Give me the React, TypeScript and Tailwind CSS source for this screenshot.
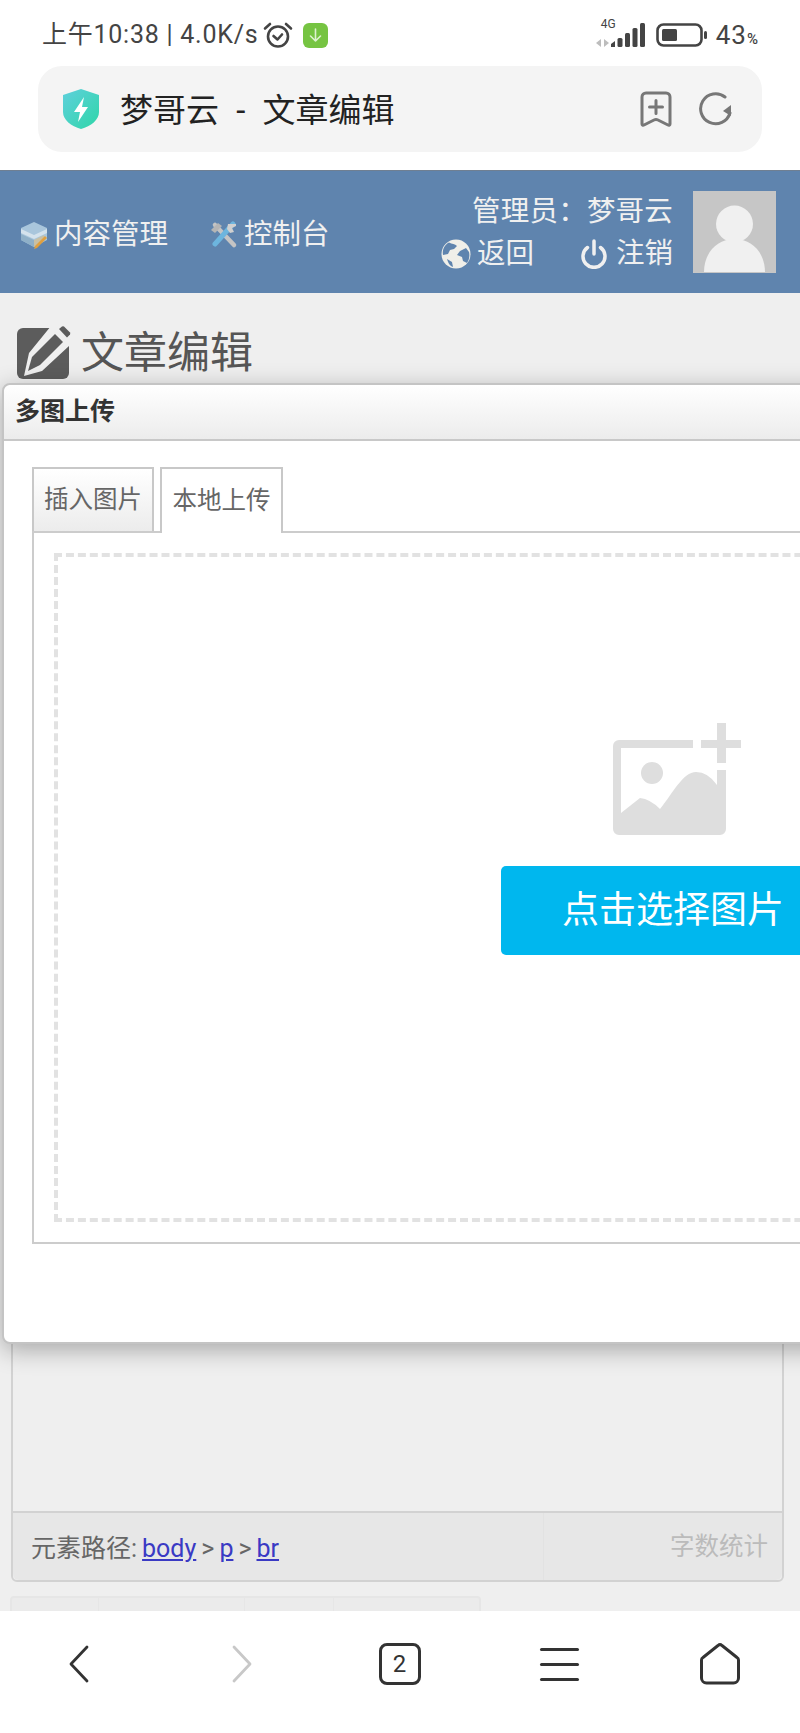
import { ReactNode } from "react";

function AlarmIcon() {
  return (
    <svg width="30" height="28" viewBox="0 0 30 28" fill="none" stroke="#444" strokeWidth="2.6" strokeLinecap="round">
      <circle cx="15" cy="15.5" r="10" />
      <path d="M10.5 15l4 3.5 4.5-5" strokeLinejoin="round" />
      <path d="M2 7.5L7 3M28 7.5L23 3" />
    </svg>
  );
}

function DownloadBadge() {
  return (
    <svg width="25" height="25" viewBox="0 0 25 25">
      <rect width="25" height="25" rx="6" fill="#76c442" />
      <path d="M12.5 6v12M7.5 13l5 5 5-5" fill="none" stroke="#dff2d0" strokeWidth="1.6" strokeLinecap="round" strokeLinejoin="round" />
    </svg>
  );
}

function SignalIcon() {
  return (
    <svg width="50" height="28" viewBox="0 0 50 28">
      <path d="M6 18v8L1 22zM9 18v8l5-4z" fill="#bdbdbd" />
      <path d="M16 23l4-3v6h-4z" fill="#444" />
      <rect x="22.5" y="17" width="5" height="9" rx="1.5" fill="#444" />
      <rect x="30" y="12" width="5" height="14" rx="1.5" fill="#444" />
      <rect x="37.5" y="7" width="5" height="19" rx="1.5" fill="#444" />
      <rect x="45" y="2" width="5" height="24" rx="1.5" fill="#444" />
    </svg>
  );
}

function BatteryIcon() {
  return (
    <svg width="52" height="24" viewBox="0 0 52 24">
      <rect x="1.5" y="1.5" width="44" height="21" rx="6" fill="none" stroke="#444" strokeWidth="2.6" />
      <rect x="6" y="6" width="15" height="12" rx="1.5" fill="#444" />
      <rect x="48" y="8" width="3" height="8" rx="1.5" fill="#444" />
    </svg>
  );
}

function ShieldIcon() {
  return (
    <svg width="38" height="42" viewBox="0 0 38 42">
      <defs>
        <linearGradient id="shield" x1="0" y1="0" x2="1" y2="1">
          <stop offset="0" stopColor="#5fd0dc" />
          <stop offset="1" stopColor="#2fd6a8" />
        </linearGradient>
      </defs>
      <path d="M19 1L37 7v17c0 8-8 14-18 17C9 38 1 32 1 24V7z" fill="url(#shield)" />
      <path d="M22 9l-10 15h6l-2 10 10-15h-6z" fill="#fff" />
    </svg>
  );
}

function BookmarkPlusIcon() {
  return (
    <svg width="32" height="36" viewBox="0 0 32 36" fill="none" stroke="#777" strokeWidth="3" strokeLinecap="round" strokeLinejoin="round">
      <path d="M2 6a4 4 0 014-4h20a4 4 0 014 4v27c0 1-1 1.500-2 1l-10-5c-1-.5-3-.5-4 0l-10 5c-1 .5-2 0-2-1z" />
      <path d="M16 9.500v13M9.500 16h13" />
    </svg>
  );
}

function ReloadIcon() {
  return (
    <svg width="34" height="34" viewBox="0 0 34 34" fill="none">
      <path d="M31 21A15 15 0 1 1 26 5" stroke="#777" strokeWidth="3" strokeLinecap="round" />
      <path d="M32 13l0 11-8-5z" fill="#777" />
    </svg>
  );
}

function BoxToolIcon() {
  return (
    <svg width="28" height="28" viewBox="0 0 28 28">
      <path d="M14 1l13 6v12l-13 7-13-7V7z" fill="#a9c6dc" />
      <path d="M1 8l13 6 13-6v4l-13 6-13-6z" fill="#d4e2ec" />
      <path d="M1 13l13 6v7l-13-7z" fill="#8fb0c8" />
      <path d="M14 19l10-5v5l-10 7z" fill="#c9c0a4" />
      <path d="M15 25l10-10 2 2-10 10-3 1z" fill="#e0a040" />
    </svg>
  );
}

function ToolsIcon() {
  return (
    <svg width="28" height="28" viewBox="0 0 28 28" fill="none">
      <path d="M5 4l19 20" stroke="#c4c4c4" strokeWidth="4.500" strokeLinecap="round" />
      <path d="M1 9l7-7 4 3-7 7z" fill="#b5b5b5" />
      <path d="M23 3L5 23" stroke="#6db5de" strokeWidth="5" strokeLinecap="round" />
      <path d="M18 3h8v2l-4 2 2 4-4 1-3-4z" fill="#d0d0d0" />
    </svg>
  );
}

function GlobeIcon() {
  return (
    <svg width="30" height="30" viewBox="0 0 30 30">
      <circle cx="15" cy="15" r="14.500" fill="#f0efe9" />
      <path d="M8 3.500C11 5 14 5 16 7l-3 3-4 1-2 4-5 1C1 10 4 5.500 8 3.500z" fill="#5f84ae" />
      <path d="M19 12l6-3 3 4c1 4 0 8-2 11l-4-2-1-4-5-2z" fill="#5f84ae" />
      <path d="M6 20l5 3 1 5c-3-1-5-4-6-8z" fill="#5f84ae" />
    </svg>
  );
}

function PowerIcon() {
  return (
    <svg width="28" height="30" viewBox="0 0 28 30" fill="none" stroke="#f0f0f0" strokeWidth="3.500" strokeLinecap="round">
      <path d="M14 2v13" />
      <path d="M7.500 8.500a11 11 0 1 0 13 0" />
    </svg>
  );
}

function Avatar() {
  return (
    <svg width="83" height="82" viewBox="0 0 83 82" className="shrink-0">
      <rect width="83" height="82" fill="#c6c6c6" />
      <circle cx="41.500" cy="33" r="18.500" fill="#f0f0f0" />
      <path d="M11 81c0-18 12-33 30.500-33S72 63 72 81z" fill="#f0f0f0" />
    </svg>
  );
}

function EditIcon() {
  return (
    <svg width="54" height="54" viewBox="0 0 54 54">
      <rect x="0" y="2" width="52" height="51" rx="6" fill="#5c5c5c" />
      <path d="M34 0H54V20H52L25 45L7 50L12 27z" fill="#efefef" />
      <path d="M11 45l4-14 23-23 8 8-23 23z" fill="#5c5c5c" />
      <path d="M42 3l3-2.500q1-.5 2 0l6 6q.5 1 0 2l-3 3z" fill="#5c5c5c" />
    </svg>
  );
}

function AddImageIcon() {
  return (
    <svg width="128" height="112" viewBox="0 0 128 112">
      <path d="M6 17H80v8H8V90L27 75Q37 76 47 86C60 70 70 49 83 49Q95 49 104 62V47h9V106a6 6 0 01-6 6H6a6 6 0 01-6-6V23a6 6 0 016-6z" fill="#dedede" />
      <circle cx="39" cy="50" r="11" fill="#dedede" />
      <path d="M88 17h16V0h9v17h15v8h-15v15h-9V25H88z" fill="#dedede" />
    </svg>
  );
}

function NavIcon({ children }: { children: ReactNode }) {
  return <span className="flex items-center justify-center w-[42px] h-[42px]">{children}</span>;
}

export default function App() {
  return (
    <div className="relative w-[800px] h-[1733px] overflow-hidden flex flex-col bg-white font-['Roboto','Noto_Sans_CJK_SC',sans-serif]">
      {/* phone status bar */}
      <div className="h-[66px] shrink-0 flex items-center justify-between pt-[4px] pl-[42px] pr-[41px] text-[25px] text-[#444]">
        <div className="flex items-center gap-[5px]">
          <span className="tracking-[0.75px]">上午10:38 | 4.0K/s</span>
          <AlarmIcon />
          <span className="ml-[5px]"><DownloadBadge /></span>
        </div>
        <div className="flex items-center gap-[8px]">
          <div className="relative">
            <span className="absolute left-[6px] -top-[3px] text-[12px] leading-none">4G</span>
            <SignalIcon />
          </div>
          <span className="ml-[3px]"><BatteryIcon /></span>
          <span className="tracking-[1px] text-[26px]">43<span className="text-[15px] font-medium">%</span></span>
        </div>
      </div>

      {/* browser address bar */}
      <div className="h-[86px] mx-[38px] shrink-0 rounded-[24px] bg-[#f4f4f4] flex items-center pl-[24px] pr-[29px]">
        <ShieldIcon />
        <span className="ml-[20px] pt-[3px] text-[33px] text-[#222] whitespace-pre [word-spacing:9px]">梦哥云 - 文章编辑</span>
        <div className="ml-auto flex items-center gap-[27px]">
          <BookmarkPlusIcon />
          <ReloadIcon />
        </div>
      </div>

      <div className="relative mt-[18px] flex-1 min-h-0 overflow-hidden bg-[#efefef] flex flex-col">
        {/* site header */}
        <header className="h-[123px] shrink-0 bg-[#5f84ae] border-t border-[#6f7f92] flex items-center pl-[20px] pr-[24px] text-[28.5px] text-[#f0f0f0]">
          <div className="flex items-center gap-[6px] pt-[6px]">
            <BoxToolIcon />
            <span>内容管理</span>
          </div>
          <div className="ml-[42px] flex items-center gap-[6px] pt-[6px]">
            <ToolsIcon />
            <span>控制台</span>
          </div>
          <div className="ml-auto flex flex-col items-end leading-[42px] pt-[1px]">
            <span className="tracking-[0.2px]">管理员：梦哥云</span>
            <div className="flex items-center">
              <GlobeIcon />
              <span className="ml-[6px]">返回</span>
              <span className="ml-[46px]"><PowerIcon /></span>
              <span className="ml-[8px]">注销</span>
            </div>
          </div>
          <span className="ml-[20px]"><Avatar /></span>
        </header>

        {/* page title */}
        <div className="flex items-center gap-[10px] pl-[17px] pt-[33px]">
          <EditIcon />
          <h1 className="text-[43px] leading-[52px] text-[#555]">文章编辑</h1>
        </div>

        {/* editor behind the dialog */}
        <div className="mt-[20px] mx-[11px] w-[773px] h-[1182px] shrink-0 flex flex-col justify-end rounded-b-[6px] border-2 border-[#d2d2d2]">
          <div className="h-[69px] flex border-t-2 border-[#d2d2d2] bg-[#e7e7e7] rounded-b-[6px]">
            <div className="flex-1 pl-[18px] pt-[18px] text-[25px] leading-[36px] text-[#666] [word-spacing:-1.200px]">
              元素路径: <a className="text-[#3a3ac4] underline">body</a> &gt; <a className="text-[#3a3ac4] underline">p</a> &gt; <a className="text-[#3a3ac4] underline">br</a>
            </div>
            <div className="w-[239px] border-l border-[#e2e2e2] pr-[14px] pt-[16px] text-right text-[24.5px] leading-[36px] text-[#bbbbbb]">
              字数统计
            </div>
          </div>
        </div>

        {/* toolbar row cut off by the browser nav */}
        <div className="mt-[14px] ml-[10px] w-[471px] h-[40px] shrink-0 flex rounded-t-[4px] border-2 border-[#e6e6e6] bg-[#ebebeb]">
          <div className="w-[87px] border-r border-[#e6e6e6]" />
          <div className="w-[146px] border-r border-[#e6e6e6]" />
          <div className="w-[89px] border-r border-[#e6e6e6]" />
        </div>

        {/* upload dialog */}
        <div className="absolute left-[2px] top-[213px] w-[1340px] h-[961px] flex flex-col rounded-[8px] border-2 border-[#c4c4c4] bg-white shadow-[0_6px_24px_rgba(0,0,0,0.3)]">
          <div className="h-[56px] shrink-0 flex items-center pl-[11px] rounded-t-[8px] bg-gradient-to-b from-white to-[#ececec] border-b-2 border-[#c8c8c8] text-[25px] font-bold text-[#333]">
            多图上传
          </div>
          <div className="pl-[28px] pr-[26px] pt-[26px]">
            <div className="flex gap-[6px] text-[24.5px] text-[#666]">
              <div className="w-[122px] h-[64px] flex items-center justify-center border-2 border-b-0 border-[#c8c8c8] bg-gradient-to-b from-white to-[#ececec]">插入图片</div>
              <div className="relative z-10 w-[123px] h-[66px] -mb-[2px] flex items-center justify-center border-2 border-b-0 border-[#c8c8c8] bg-white">本地上传</div>
            </div>
            <div className="h-[713px] border-2 border-[#cccccc] p-[20px]">
              <div className="h-full border-[4px] border-dashed border-[#e2e2e2] flex flex-col items-center pt-[166px]">
                <span className="ml-[8px]"><AddImageIcon /></span>
                <div className="mt-[31px] w-[344px] h-[89px] flex items-center justify-center rounded-[5px] bg-[#00b7ee] text-[37px] text-white">
                  点击选择图片
                </div>
              </div>
            </div>
          </div>
        </div>
      </div>

      {/* browser bottom nav */}
      <nav className="h-[122px] shrink-0 bg-white flex items-start justify-between pl-[58px] pr-[59px] pt-[32px]">
        <NavIcon>
          <svg width="20" height="38" viewBox="0 0 20 38" fill="none" stroke="#333" strokeWidth="2.800" strokeLinecap="round" strokeLinejoin="round">
            <path d="M18 2L2 19l16 17" />
          </svg>
        </NavIcon>
        <NavIcon>
          <span className="ml-[6px]">
            <svg width="20" height="38" viewBox="0 0 20 38" fill="none" stroke="#c8c8c8" strokeWidth="2.800" strokeLinecap="round" strokeLinejoin="round">
              <path d="M2 2l16 17L2 36" />
            </svg>
          </span>
        </NavIcon>
        <span className="flex items-center justify-center w-[42px] h-[42px] rounded-[8px] border-[3px] border-[#333] text-[24px] text-[#333]">2</span>
        <NavIcon>
          <span className="flex flex-col gap-[12px]">
            <span className="block w-[39px] h-[3px] rounded-full bg-[#333]" />
            <span className="block w-[39px] h-[3px] rounded-full bg-[#333]" />
            <span className="block w-[39px] h-[3px] rounded-full bg-[#333]" />
          </span>
        </NavIcon>
        <NavIcon>
          <svg width="42" height="42" viewBox="0 0 42 42" fill="none" stroke="#333" strokeWidth="3" strokeLinejoin="round">
            <path d="M19 2.500a3 3 0 014 0l15 12a3 3 0 011.500 2.500v18a5 5 0 01-5 5h-27a5 5 0 01-5-5V17a3 3 0 011.500-2.500z" />
          </svg>
        </NavIcon>
      </nav>
    </div>
  );
}
